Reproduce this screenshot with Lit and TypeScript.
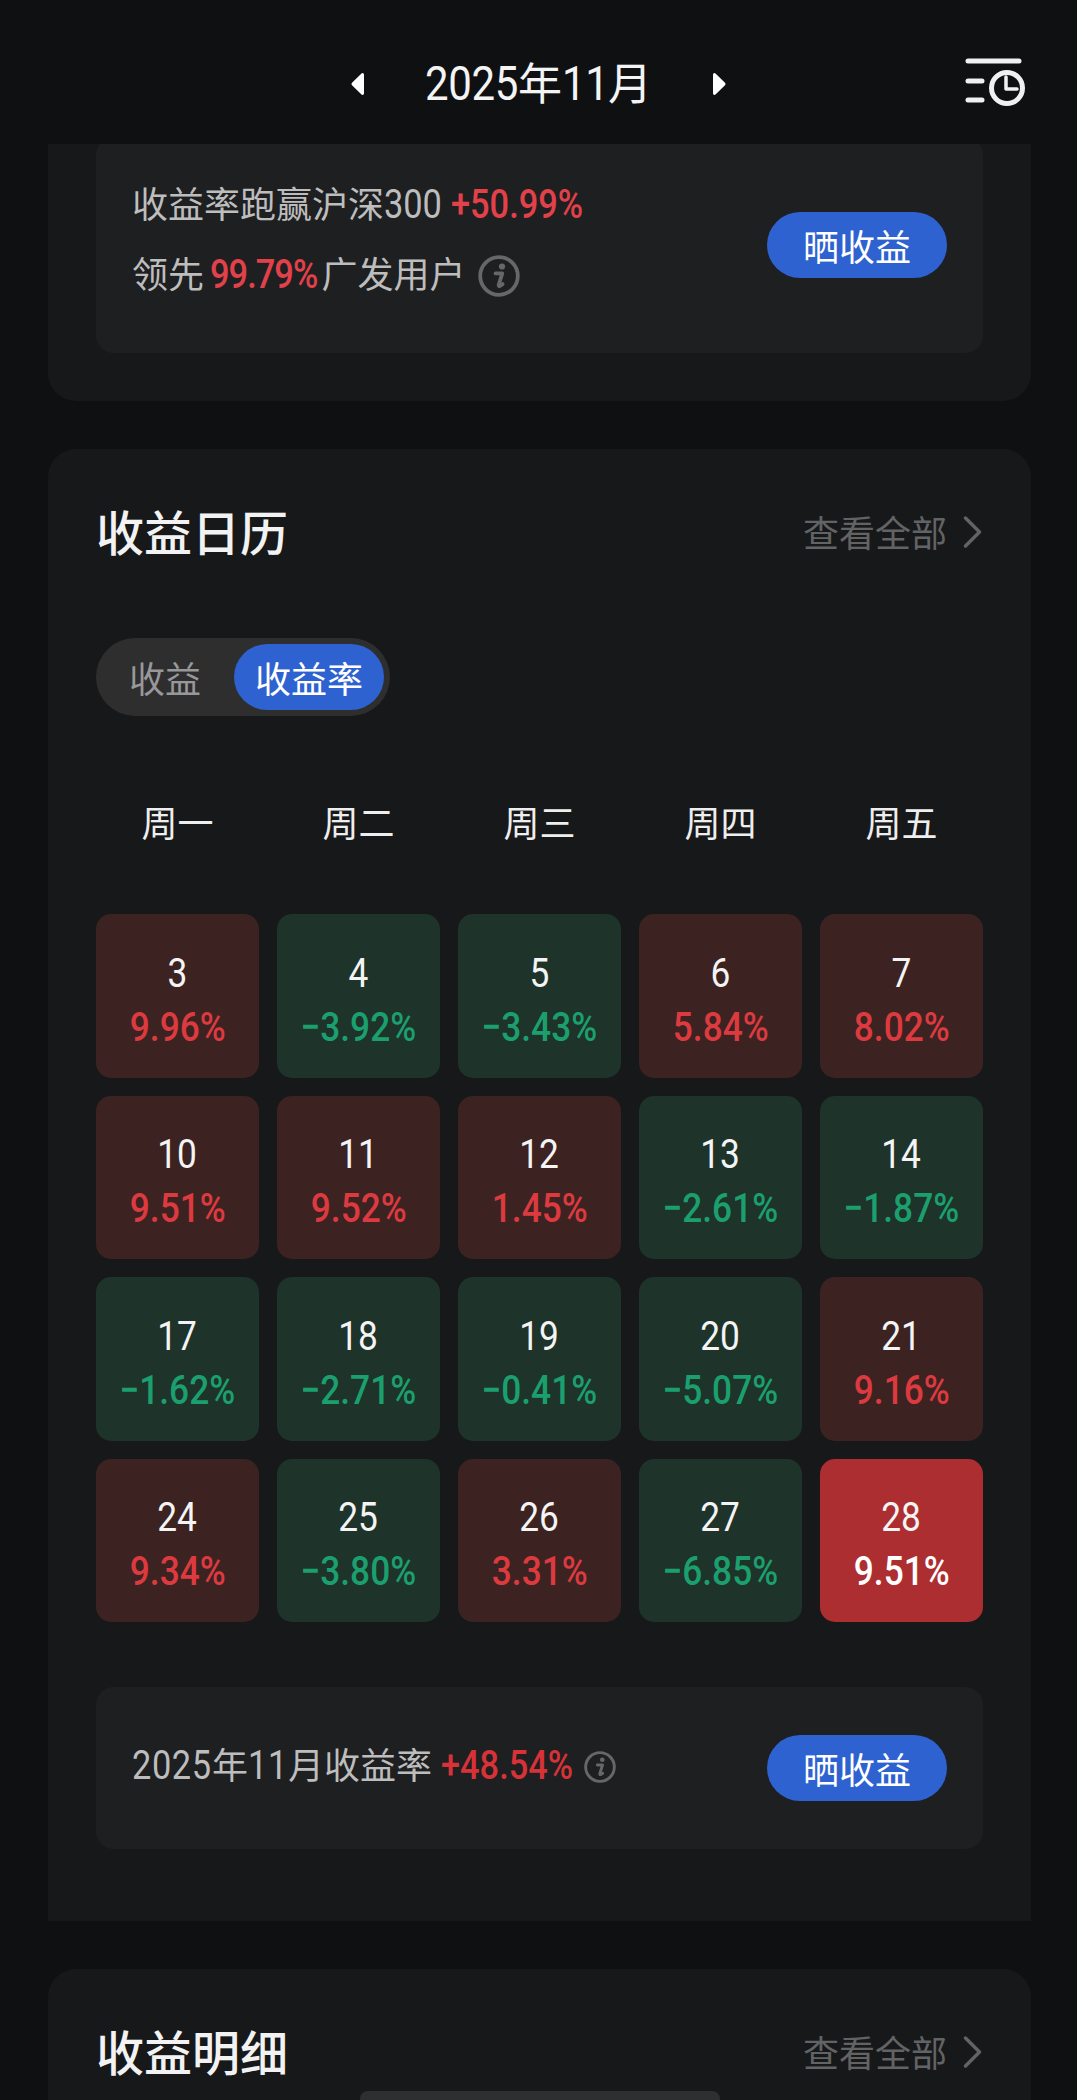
import { LitElement, html, css, svg } from 'lit';
import { customElement } from 'lit/decorators.js';
import { classMap } from 'lit/directives/class-map.js';

interface Day {
  day: number;
  rate: string;
  selected?: boolean;
}

const WEEKDAYS = ['周一', '周二', '周三', '周四', '周五'];

const DAYS: Day[] = [
  { day: 3, rate: '9.96%' },
  { day: 4, rate: '-3.92%' },
  { day: 5, rate: '-3.43%' },
  { day: 6, rate: '5.84%' },
  { day: 7, rate: '8.02%' },
  { day: 10, rate: '9.51%' },
  { day: 11, rate: '9.52%' },
  { day: 12, rate: '1.45%' },
  { day: 13, rate: '-2.61%' },
  { day: 14, rate: '-1.87%' },
  { day: 17, rate: '-1.62%' },
  { day: 18, rate: '-2.71%' },
  { day: 19, rate: '-0.41%' },
  { day: 20, rate: '-5.07%' },
  { day: 21, rate: '9.16%' },
  { day: 24, rate: '9.34%' },
  { day: 25, rate: '-3.80%' },
  { day: 26, rate: '3.31%' },
  { day: 27, rate: '-6.85%' },
  { day: 28, rate: '9.51%', selected: true },
];

// Digits are drawn taller and narrower than Roboto's; the negative margin gives back
// the width the horizontal scale removes, which depends on the number of characters.
const digits = (text: string, extra = '') =>
  html`<span class="digits ${extra}" style="margin-right: calc(${text.length} * -0.14ch)">${text}</span>`;

const infoIcon = (size: number) => html`
  <svg class="info" width=${size} height=${size} viewBox="0 0 42 42" fill="none">
    <circle cx="21" cy="21" r="18.800" stroke="currentColor" stroke-width="3.800" />
    ${svg`<circle cx="24" cy="11.500" r="3.100" fill="currentColor" />`}
    ${svg`<path d="M17.500 18.400h6.800l-3.600 11.400c-.3 1 .5 1.500 1.300 1l2.600-1.700" stroke="currentColor" stroke-width="3.800" stroke-linecap="round" stroke-linejoin="round" />`}
  </svg>
`;

const chevron = html`
  <svg width="20" height="32" viewBox="0 0 20 32" fill="none">
    <path d="M2.500 2l14 14-14 14" stroke="currentColor" stroke-width="3.400" stroke-linecap="round" stroke-linejoin="round" />
  </svg>
`;

@customElement('app-root')
export class AppRoot extends LitElement {
  static styles = css`
    :host {
      display: block;
      position: relative;
      height: 2100px;
      overflow: hidden;
      background: #0f1012;
      font-family: Roboto, 'Noto Sans CJK SC', sans-serif;
      color: #fff;
    }

    .digits {
      display: inline-block;
      font-size: 1.11em;
      transform: scaleX(0.86);
      transform-origin: left center;
    }

    .topbar {
      height: 144px;
      box-sizing: border-box;
      padding: 24px 51px 0;
      display: grid;
      grid-template-columns: 1fr auto 1fr;
      align-items: center;
    }

    .month {
      display: flex;
      align-items: center;
      gap: 59px;
      font-size: 44px;
      line-height: 60px;
      color: #f4f4f4;
    }

    .month .label {
      white-space: nowrap;
      letter-spacing: -0.4px;
    }

    .history {
      justify-self: end;
      margin-top: -2px;
      display: block;
    }

    .card {
      margin: 0 46px 48px 48px;
      background: #17181a;
      border-radius: 28px;
      padding: 0 48px;
    }

    .overview {
      border-radius: 0 0 28px 28px;
      padding-bottom: 48px;
      overflow: hidden;
    }

    .panel {
      background: #1e1f21;
      border-radius: 18px;
      box-sizing: border-box;
      padding: 0 36px;
      display: flex;
      align-items: center;
      justify-content: space-between;
      color: #bdbdbd;
      font-size: 36px;
    }

    .overview .panel {
      height: 216px;
      margin-top: -7px;
    }

    .lines {
      display: flex;
      flex-direction: column;
      gap: 28px;
      padding-bottom: 10px;
    }

    .line {
      height: 42px;
      line-height: 42px;
      white-space: nowrap;
    }

    .line.tight {
      word-spacing: -3px;
    }

    .line.tight .up {
      letter-spacing: -1.1px;
    }

    .up {
      color: #e2414a;
      font-weight: 500;
    }

    .info {
      color: #666769;
      vertical-align: middle;
      margin: -4px 0 0 6px;
    }

    .summary .info {
      margin-left: 3px;
    }

    .share {
      width: 180px;
      height: 66px;
      border-radius: 33px;
      background: #2e62d0;
      color: #fff;
      font-size: 36px;
      display: flex;
      align-items: center;
      justify-content: center;
    }

    .calendar {
      border-radius: 28px 28px 0 0;
      padding-top: 50px;
      padding-bottom: 72px;
    }

    .head {
      height: 66px;
      display: flex;
      align-items: center;
      justify-content: space-between;
    }

    .head h2 {
      margin: -5px 0 0;
      font-size: 48px;
      font-weight: 500;
      color: #f2f2f2;
    }

    .more {
      display: flex;
      align-items: center;
      gap: 16px;
      font-size: 36px;
      color: #626365;
    }

    .more span {
      margin-top: -2px;
    }

    .toggle {
      margin-top: 73px;
      width: 294px;
      height: 78px;
      box-sizing: border-box;
      padding: 6px;
      border-radius: 39px;
      background: #2e2e2f;
      display: flex;
      align-items: center;
      justify-content: space-between;
      font-size: 36px;
      color: #98989a;
    }

    .toggle span {
      padding-left: 27px;
    }

    .toggle b {
      width: 150px;
      height: 66px;
      border-radius: 33px;
      background: #2e62d0;
      color: #fff;
      font-weight: 400;
      display: flex;
      align-items: center;
      justify-content: center;
    }

    .week,
    .grid {
      display: grid;
      grid-template-columns: repeat(5, 1fr);
      column-gap: 18px;
    }

    .week {
      margin-top: 75px;
      height: 60px;
      margin-bottom: 63px;
      align-items: center;
      text-align: center;
      font-size: 36px;
      color: #eeeeee;
    }

    .grid {
      row-gap: 18px;
    }

    .cell {
      height: 163.500px;
      border-radius: 15px;
      box-sizing: border-box;
      padding-top: 8px;
      display: flex;
      flex-direction: column;
      align-items: center;
      justify-content: center;
      gap: 8px;
      font-size: 41px;
      line-height: 46px;
    }

    .cell .num,
    .cell .rate {
      display: block;
      transform: scaleX(0.86);
    }

    .cell .num {
      color: #f4f4f4;
    }

    .cell .rate {
      font-weight: 500;
    }

    .cell.gain {
      background: #3c2321;
      color: #dd3a40;
    }

    .cell.loss {
      background: #1e3329;
      color: #1b9f6e;
    }

    .cell.selected {
      background: #ad2e30;
      color: #fff;
    }

    .summary {
      margin-top: 65px;
      height: 162px;
    }

    .summary .line {
      margin-top: -5px;
    }

    .summary .digits:not(.up) {
      letter-spacing: 0.7px;
    }

    .summary .up {
      color: #d73238;
    }

    .details {
      border-radius: 28px 28px 0 0;
      padding-top: 50px;
      height: 200px;
    }

    .home-bar {
      position: absolute;
      left: 360px;
      bottom: 0;
      width: 360px;
      height: 9px;
      border-radius: 8px 8px 0 0;
      background: #2e2f31;
    }
  `;

  private renderMore() {
    return html`<div class="more"><span>查看全部</span>${chevron}</div>`;
  }

  private renderDay(item: Day) {
    const down = item.rate.startsWith('-');
    const classes = { cell: true, gain: !down, loss: down, selected: !!item.selected };
    return html`
      <div class=${classMap(classes)}>
        <span class="num">${item.day}</span>
        <span class="rate">${item.rate.replace('-', '−')}</span>
      </div>
    `;
  }

  render() {
    return html`
      <header class="topbar">
        <span></span>
        <div class="month">
          <svg width="16" height="24" viewBox="0 0 16 24" fill="#fff">
            <path d="M14 2.500v19a1.500 1.500 0 0 1-2.500 1.100L2 13.200a1.700 1.700 0 0 1 0-2.400l9.500-9.400A1.500 1.500 0 0 1 14 2.500z" />
          </svg>
          <span class="label">${digits('2025')}年${digits('11')}月</span>
          <svg width="16" height="24" viewBox="0 0 16 24" fill="#fff">
            <path d="M2 2.500v19a1.500 1.500 0 0 0 2.500 1.100l9.500-9.400a1.700 1.700 0 0 0 0-2.400L4.500 1.400A1.500 1.500 0 0 0 2 2.500z" />
          </svg>
        </div>
        <svg class="history" width="62" height="50" viewBox="0 0 62 50" fill="none" stroke="#f0f0f0" stroke-linecap="round">
          <path d="M4 3h51M4 23h14M4 42h14" stroke-width="5" />
          <circle cx="43" cy="30" r="15.500" stroke-width="5" />
          <path d="M42 19v12h11" stroke-width="3.500" stroke-linejoin="round" />
        </svg>
      </header>

      <section class="card overview">
        <div class="panel">
          <div class="lines">
            <div class="line">收益率跑赢沪深${digits('300')} ${digits('+50.99%', 'up')}</div>
            <div class="line tight">领先 ${digits('99.79%', 'up')} 广发用户 ${infoIcon(42)}</div>
          </div>
          <div class="share">晒收益</div>
        </div>
      </section>

      <section class="card calendar">
        <div class="head">
          <h2>收益日历</h2>
          ${this.renderMore()}
        </div>
        <div class="toggle">
          <span>收益</span>
          <b>收益率</b>
        </div>
        <div class="week">${WEEKDAYS.map((name) => html`<span>${name}</span>`)}</div>
        <div class="grid">${DAYS.map((item) => this.renderDay(item))}</div>
        <div class="panel summary">
          <div class="line">${digits('2025')}年${digits('11')}月收益率 ${digits('+48.54%', 'up')} ${infoIcon(32)}</div>
          <div class="share">晒收益</div>
        </div>
      </section>

      <section class="card details">
        <div class="head">
          <h2>收益明细</h2>
          ${this.renderMore()}
        </div>
      </section>

      <div class="home-bar"></div>
    `;
  }
}
